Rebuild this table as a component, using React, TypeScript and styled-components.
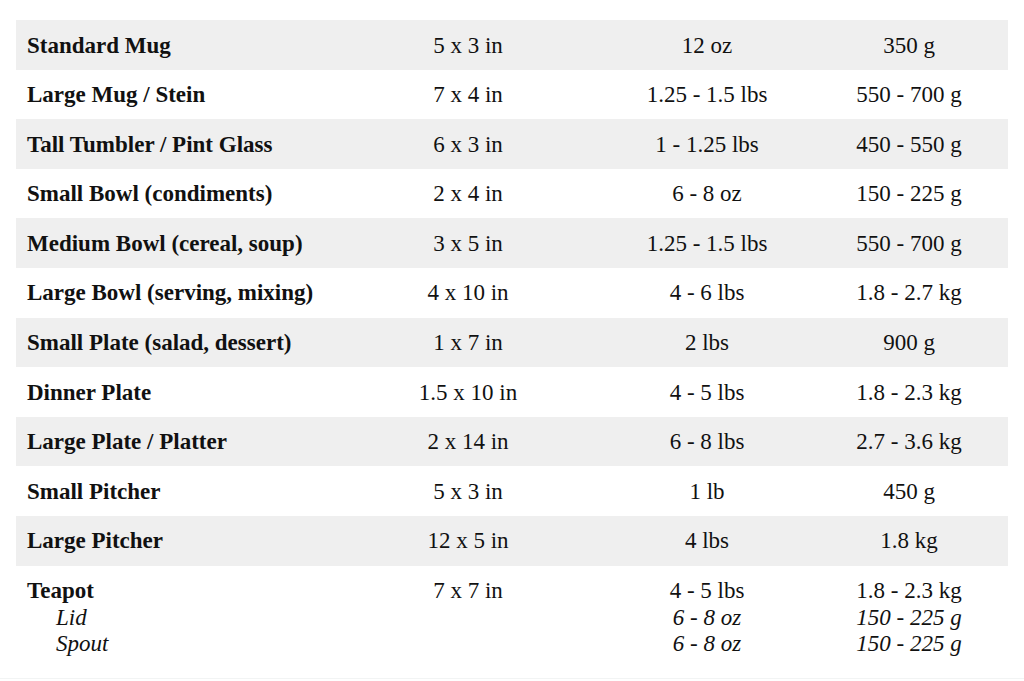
import styled, { createGlobalStyle } from 'styled-components'

const GlobalStyle = createGlobalStyle`
  html, body {
    margin: 0;
    padding: 0;
    background: #ffffff;
  }
  body {
    font-family: "Liberation Serif", "Times New Roman", serif;
    color: #111111;
  }
`

const Page = styled.div`
  padding: 20px 16px 0;
  border-bottom: 1px solid #f2f4f4;
  width: 992px;
`

const Table = styled.table`
  width: 992px;
  border-collapse: collapse;
  table-layout: fixed;
  font-family: "Liberation Serif", "Times New Roman", serif;
  font-size: 23px;
  line-height: 27.6px;
  color: #111111;

  tbody tr:nth-child(odd) {
    background-color: #efefef;
  }
`

const Cell = styled.td<{ $align?: 'left' | 'center' }>`
  padding: 11.5px 11px 10.5px;
  text-align: ${(p) => p.$align ?? 'center'};
  vertical-align: top;
  white-space: nowrap;
`

const Name = styled.div`
  font-weight: 700;
`

const Sub = styled.div<{ $indent?: boolean }>`
  font-style: italic;
  line-height: 26px;
  padding-left: ${(p) => (p.$indent ? '29px' : '0')};
`

const LastRow = styled.tr`
  td {
    padding-bottom: 21px;
  }
`

type Row = [string, string, string, string]

const rows: Row[] = [
  ['Standard Mug', '5 x 3 in', '12 oz', '350 g'],
  ['Large Mug / Stein', '7 x 4 in', '1.25 - 1.5 lbs', '550 - 700 g'],
  ['Tall Tumbler / Pint Glass', '6 x 3 in', '1 - 1.25 lbs', '450 - 550 g'],
  ['Small Bowl (condiments)', '2 x 4 in', '6 - 8 oz', '150 - 225 g'],
  ['Medium Bowl (cereal, soup)', '3 x 5 in', '1.25 - 1.5 lbs', '550 - 700 g'],
  ['Large Bowl (serving, mixing)', '4 x 10 in', '4 - 6 lbs', '1.8 - 2.7 kg'],
  ['Small Plate (salad, dessert)', '1 x 7 in', '2 lbs', '900 g'],
  ['Dinner Plate', '1.5 x 10 in', '4 - 5 lbs', '1.8 - 2.3 kg'],
  ['Large Plate / Platter', '2 x 14 in', '6 - 8 lbs', '2.7 - 3.6 kg'],
  ['Small Pitcher', '5 x 3 in', '1 lb', '450 g'],
  ['Large Pitcher', '12 x 5 in', '4 lbs', '1.8 kg'],
]

export default function App() {
  return (
    <>
      <GlobalStyle />
      <Page>
        <Table>
          <colgroup>
            <col style={{ width: 316 }} />
            <col style={{ width: 272 }} />
            <col style={{ width: 206 }} />
            <col style={{ width: 198 }} />
          </colgroup>
          <tbody>
            {rows.map(([name, size, lbs, grams]) => (
              <tr key={name}>
                <Cell $align="left">
                  <Name>{name}</Name>
                </Cell>
                <Cell>{size}</Cell>
                <Cell>{lbs}</Cell>
                <Cell>{grams}</Cell>
              </tr>
            ))}
            <LastRow>
              <Cell $align="left">
                <Name>Teapot</Name>
                <Sub $indent>Lid</Sub>
                <Sub $indent>Spout</Sub>
              </Cell>
              <Cell>7 x 7 in</Cell>
              <Cell>
                <div>4 - 5 lbs</div>
                <Sub>6 - 8 oz</Sub>
                <Sub>6 - 8 oz</Sub>
              </Cell>
              <Cell>
                <div>1.8 - 2.3 kg</div>
                <Sub>150 - 225 g</Sub>
                <Sub>150 - 225 g</Sub>
              </Cell>
            </LastRow>
          </tbody>
        </Table>
      </Page>
    </>
  )
}
